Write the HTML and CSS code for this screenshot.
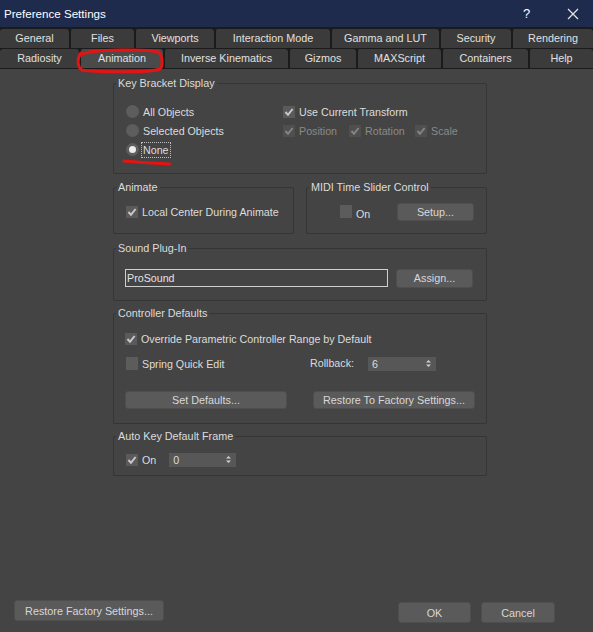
FILE: index.html
```html
<!DOCTYPE html>
<html>
<head>
<meta charset="utf-8">
<title>Preference Settings</title>
<link rel="stylesheet" href="styles.css">
</head>
<body>
<div class="window">
  <div class="titlebar">
    <span class="title">Preference Settings</span>
    <span class="help">?</span>
    <span class="close"><svg width="12" height="12" viewBox="0 0 12 12"><path d="M1 1 L11 11 M11 1 L1 11" stroke="#e6e6e6" stroke-width="1.2" fill="none"/></svg></span>
  </div>

  <div class="tabs">
    <div class="tabrow row1">
      <div class="tab">General</div>
      <div class="tab">Files</div>
      <div class="tab">Viewports</div>
      <div class="tab">Interaction Mode</div>
      <div class="tab">Gamma and LUT</div>
      <div class="tab">Security</div>
      <div class="tab">Rendering</div>
    </div>
    <div class="tabrow row2">
      <div class="tab">Radiosity</div>
      <div class="tab active">Animation</div>
      <div class="tab">Inverse Kinematics</div>
      <div class="tab">Gizmos</div>
      <div class="tab">MAXScript</div>
      <div class="tab">Containers</div>
      <div class="tab">Help</div>
    </div>
  </div>

  <div class="content">
    <fieldset class="group kbd">
      <legend>Key Bracket Display</legend>
      <div class="kbd-body">
        <div class="kbd-left">
          <div class="row"><span class="radio"></span><span class="label">All Objects</span></div>
          <div class="row"><span class="radio"></span><span class="label">Selected Objects</span></div>
          <div class="row"><span class="radio on"></span><span class="label focus">None</span></div>
        </div>
        <div class="kbd-right">
          <div class="row"><span class="check"><svg viewBox="0 0 12 12"><path d="M2.5 6 L5 8.8 L9.6 3" /></svg></span><span class="label">Use Current Transform</span></div>
          <div class="row subs">
            <div class="sub"><span class="check dis"><svg viewBox="0 0 12 12"><path d="M2.5 6 L5 8.8 L9.6 3" /></svg></span><span class="label dim">Position</span></div>
            <div class="sub"><span class="check dis"><svg viewBox="0 0 12 12"><path d="M2.5 6 L5 8.8 L9.6 3" /></svg></span><span class="label dim">Rotation</span></div>
            <div class="sub"><span class="check dis"><svg viewBox="0 0 12 12"><path d="M2.5 6 L5 8.8 L9.6 3" /></svg></span><span class="label dim">Scale</span></div>
          </div>
        </div>
      </div>
    </fieldset>

    <div class="pair">
      <fieldset class="group half">
        <legend>Animate</legend>
        <div class="row"><span class="check"><svg viewBox="0 0 12 12"><path d="M2.5 6 L5 8.8 L9.6 3" /></svg></span><span class="label">Local Center During Animate</span></div>
      </fieldset>
      <fieldset class="group half">
        <legend>MIDI Time Slider Control</legend>
        <div class="row midi-row">
          <span class="check empty"></span><span class="label on-label">On</span>
          <button class="btn setup">Setup...</button>
        </div>
      </fieldset>
    </div>

    <fieldset class="group sound">
      <legend>Sound Plug-In</legend>
      <div class="row sound-row">
        <div class="textbox">ProSound</div>
        <button class="btn assign">Assign...</button>
      </div>
    </fieldset>

    <fieldset class="group ctrl">
      <legend>Controller Defaults</legend>
      <div class="row"><span class="check"><svg viewBox="0 0 12 12"><path d="M2.5 6 L5 8.8 L9.6 3" /></svg></span><span class="label">Override Parametric Controller Range by Default</span></div>
      <div class="row spring-row">
        <div class="spring-left"><span class="check empty"></span><span class="label">Spring Quick Edit</span></div>
        <span class="label rollback">Rollback:</span>
        <div class="spinner wide"><span>6</span><svg class="arrows" width="5" height="9" viewBox="0 0 5 9"><path d="M0 3.5 L2.5 1 L5 3.5 Z M0 5.5 L2.5 8 L5 5.5 Z" fill="#cfcfcf"/></svg></div>
      </div>
      <div class="row btn-row">
        <button class="btn big">Set Defaults...</button>
        <button class="btn big">Restore To Factory Settings...</button>
      </div>
    </fieldset>

    <fieldset class="group autokey">
      <legend>Auto Key Default Frame</legend>
      <div class="row">
        <span class="check"><svg viewBox="0 0 12 12"><path d="M2.5 6 L5 8.8 L9.6 3" /></svg></span><span class="label">On</span>
        <div class="spinner narrow"><span>0</span><svg class="arrows" width="5" height="9" viewBox="0 0 5 9"><path d="M0 3.5 L2.5 1 L5 3.5 Z M0 5.5 L2.5 8 L5 5.5 Z" fill="#cfcfcf"/></svg></div>
      </div>
    </fieldset>
  </div>

  <div class="footer">
    <button class="btn restore">Restore Factory Settings...</button>
    <button class="btn ok">OK</button>
    <button class="btn cancel">Cancel</button>
  </div>

  <svg class="mark" width="593" height="632" viewBox="0 0 593 632">
    <path d="M83 54 C 92 49, 148 49, 158 52 C 163 55, 163 66, 160 69 C 150 73, 92 72, 82 70 C 77 67, 77 58, 81 53" fill="none" stroke="#e41414" stroke-width="3" stroke-linecap="round"/>
    <path d="M124 161 Q 146 163 170 164" fill="none" stroke="#e41414" stroke-width="3" stroke-linecap="round"/>
  </svg>
</div>
</body>
</html>
```

FILE: styles.css
```css
* { box-sizing: border-box; }

html, body {
  margin: 0;
  padding: 0;
  background: #444444;
}

body {
  font-family: "Liberation Sans", Arial, sans-serif;
  font-size: 10.7px;
  color: #dcdcdc;
}

.window {
  position: relative;
  width: 593px;
  height: 632px;
  display: flex;
  flex-direction: column;
  background: #444444;
  overflow: hidden;
}

/* Title bar */
.titlebar {
  height: 27px;
  background: #1e2b4c;
  display: flex;
  align-items: center;
  padding-left: 4px;
  color: #ffffff;
}
.title { font-size: 11.6px; flex: 1; }
.help { font-size: 13px; width: 14px; margin-right: 30px; }
.close { width: 12px; height: 12px; margin-right: 14px; display: flex; }

/* Tabs */
.tabs {
  background: #1b1b1b;
  padding-top: 2px;
  padding-bottom: 1px;
  display: flex;
  flex-direction: column;
  gap: 1px;
}
.tabrow {
  display: grid;
  height: 19px;
}
.row1 { grid-template-columns: 69px 65px 80px 116px 109px 72px 82px; }
.row2 { grid-template-columns: 79px 84px 125px 68px 85px 87px 65px; }
.tab {
  background: #3b3b3b;
  border-left: 2px solid #1b1b1b;
  border-radius: 3px 3px 0 0;
  display: flex;
  align-items: center;
  justify-content: center;
  color: #e0e0e0;
  font-size: 10.8px;
  line-height: 19px;
}
.tab:first-child { border-left: none; }
.tab.active { background: #4a4a4a; }

/* Content */
.content {
  margin-left: 113px;
  width: 374px;
  display: flex;
  flex-direction: column;
}

.group {
  margin: 0;
  padding: 0 11px;
  border: 1px solid #353535;
  border-radius: 2px;
  min-width: 0;
}
.group legend {
  padding: 0 2px;
  margin-left: -9px;
  line-height: 14px;
  font-size: 10.8px;
  color: #dcdcdc;
}

.row {
  display: flex;
  align-items: center;
  height: 19px;
}

.label { margin-left: 4px; white-space: nowrap; }
.label.dim { color: #8a8a8a; }
.label.focus {
  outline: 1px dotted #bdbdbd;
  outline-offset: 0;
  padding: 1px 1px;
  margin-left: 3px;
}

.radio {
  width: 13px;
  height: 13px;
  border-radius: 50%;
  background: #5d5d5d;
  flex: none;
  display: flex;
  align-items: center;
  justify-content: center;
}
.radio.on::after {
  content: "";
  width: 7px;
  height: 7px;
  border-radius: 50%;
  background: #ececec;
}

.check {
  width: 12px;
  height: 12px;
  background: #5a5a5a;
  flex: none;
  display: flex;
}
.check svg { width: 12px; height: 12px; }
.check svg path {
  fill: none;
  stroke: #c9c9c9;
  stroke-width: 2;
}
.check.dis { background: #4f4f4f; }
.check.dis svg path { stroke: #858585; }
.check.empty { background: #5c5c5c; width: 12px; height: 13px; }

/* Key bracket display */
.kbd { margin-top: 7px; padding-top: 12px; padding-bottom: 14px; }
.kbd-body { display: flex; }
.kbd-left { width: 157px; flex: none; margin-left: 1px; }
.kbd-right { flex: 1; min-width: 0; }
.subs { display: flex; }
.sub { width: 66px; flex: none; display: flex; align-items: center; }

/* Animate / MIDI */
.pair {
  margin-top: 6px;
  display: flex;
  gap: 12px;
}
.half {
  flex: 1;
  padding-top: 8px;
  padding-bottom: 12px;
}
.half .row { margin-left: 1px; }
.midi-row { padding-left: 21px; }
.on-label { margin-top: 4px; }
.btn {
  font-family: "Liberation Sans", Arial, sans-serif;
  font-size: 10.8px;
  color: #d8d8d8;
  background: #5a5a5a;
  border: 1px solid #4e4e4e;
  border-radius: 3px;
  padding: 0;
  margin: 0;
  height: 18px;
}
.setup { width: 77px; margin-left: auto; margin-right: 1px; margin-top: 1px; }

/* Sound */
.sound { margin-top: 7px; padding-top: 13px; padding-bottom: 13px; }
.sound-row { justify-content: space-between; }
.textbox {
  width: 263px;
  height: 18px;
  border: 1px solid #cfcfcf;
  background: #444444;
  padding-left: 1px;
  line-height: 16px;
  color: #e2e2e2;
}
.assign { width: 77px; height: 19px; margin-right: 2px; margin-top: 1px; }

/* Controller defaults */
.ctrl { margin-top: 5px; padding-top: 9px; padding-bottom: 14px; }
.ctrl .row:first-child { margin-left: 1px; }
.spring-row { margin-top: 6px; }
.spring-left { display: flex; align-items: center; width: 184px; margin-left: 1px; }
.rollback { margin-left: 0; margin-top: -2px; width: 58px; }
.spinner {
  height: 14px;
  background: #575757;
  display: flex;
  align-items: center;
  justify-content: space-between;
  padding: 0 5px 0 4px;
  color: #dcdcdc;
}
.spinner.wide { width: 68px; }
.spinner.narrow { width: 67px; margin-left: 13px; }
.btn-row { margin-top: 18px; justify-content: space-between; height: 18px; }
.btn.big { width: 162px; height: 18px; }

/* Auto key */
.autokey { margin-top: 5px; padding-top: 7px; padding-bottom: 6px; }
.autokey .row { margin-left: 1px; }

/* Footer */
.footer {
  margin-top: auto;
  display: flex;
  align-items: flex-end;
  padding: 0 38px 9px 14px;
}
.restore { width: 150px; height: 21px; margin-bottom: 2px; margin-right: auto; }
.ok { width: 73px; height: 21px; }
.cancel { width: 74px; height: 21px; margin-left: 10px; }

/* Annotation marks (drawn over the dialog) */
.mark {
  position: absolute;
  left: 0;
  top: 0;
  pointer-events: none;
}
```
